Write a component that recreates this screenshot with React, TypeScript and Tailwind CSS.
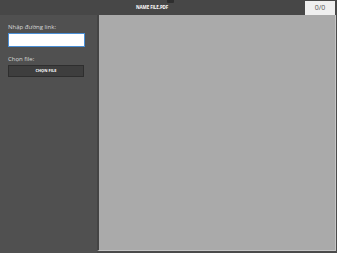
import React from "react";

export default function App() {
  return (
    <div
      className="w-[337px] h-[253px] flex flex-col bg-[#4b4b4b] overflow-hidden"
      style={{ fontFamily: '"Open Sans", "Liberation Sans", sans-serif' }}
    >
      {/* header */}
      <div className="relative h-[15px] shrink-0 flex items-center bg-[#474747]">
        <div className="absolute left-[167px] top-0 w-[7px] h-[3px] bg-[#2e2e2e] rounded-b-[1px]" />
        <span className="ml-[136px] text-[4.5px] font-bold text-white tracking-tight">NAME FILE.PDF</span>
        <div className="absolute right-[2px] top-[1px] w-[30px] h-[14px] bg-[#efefef] flex items-center justify-center text-[7px] text-[#555]">
          0/0
        </div>
      </div>
      <div className="flex flex-1 min-h-0">
        {/* sidebar */}
        <div className="w-[97px] shrink-0 bg-[#505050] px-[8px] pt-[8px] flex flex-col">
          <span className="text-[6px] text-[#d8d8d8] leading-[8px]">Nhập đường link:</span>
          <input className="mt-[2px] w-[77px] h-[14px] bg-white border-[1.5px] border-[#4a8fd6] outline-none" />
          <span className="mt-[8px] text-[6px] text-[#d8d8d8] leading-[8px]">Chọn file:</span>
          <button className="mt-[2px] w-[76px] h-[12px] bg-[#3e3e3e] border border-[#2e2e2e] flex items-center justify-center text-[4px] font-bold text-white">
            CHỌN FILE
          </button>
        </div>
        {/* viewer */}
        <div className="flex-1 border-l-[2px] border-[#444] mb-[2px] mr-[1px] bg-[#aaaaaa] border-r border-r-[#c4c4c4] border-b border-b-[#c4c4c4]" />
      </div>
    </div>
  );
}
